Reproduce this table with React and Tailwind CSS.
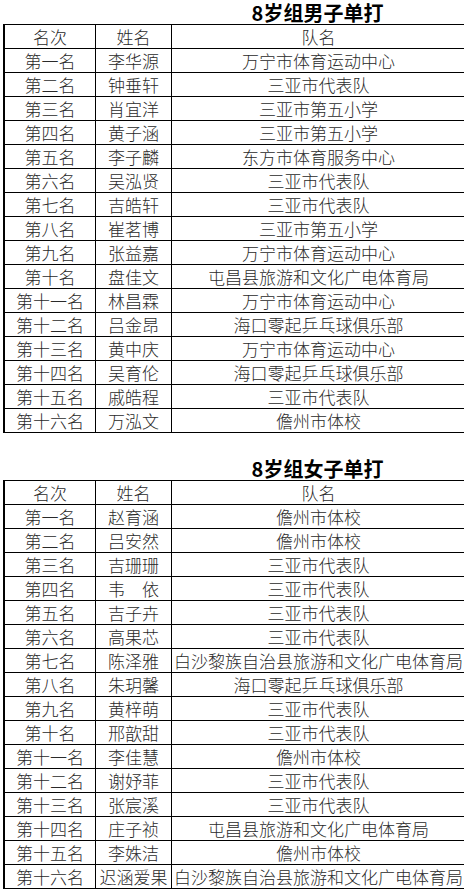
import React from "react";

const boys = [
  ["第一名", "李华源", "万宁市体育运动中心"],
  ["第二名", "钟垂轩", "三亚市代表队"],
  ["第三名", "肖宜洋", "三亚市第五小学"],
  ["第四名", "黄子涵", "三亚市第五小学"],
  ["第五名", "李子麟", "东方市体育服务中心"],
  ["第六名", "吴泓贤", "三亚市代表队"],
  ["第七名", "吉皓轩", "三亚市代表队"],
  ["第八名", "崔茗博", "三亚市第五小学"],
  ["第九名", "张益嘉", "万宁市体育运动中心"],
  ["第十名", "盘佳文", "屯昌县旅游和文化广电体育局"],
  ["第十一名", "林昌霖", "万宁市体育运动中心"],
  ["第十二名", "吕金昂", "海口零起乒乓球俱乐部"],
  ["第十三名", "黄中庆", "万宁市体育运动中心"],
  ["第十四名", "吴育伦", "海口零起乒乓球俱乐部"],
  ["第十五名", "戚皓程", "三亚市代表队"],
  ["第十六名", "万泓文", "儋州市体校"],
];

const girls = [
  ["第一名", "赵育涵", "儋州市体校"],
  ["第二名", "吕安然", "儋州市体校"],
  ["第三名", "吉珊珊", "三亚市代表队"],
  ["第四名", "韦　依", "三亚市代表队"],
  ["第五名", "吉子卉", "三亚市代表队"],
  ["第六名", "高果芯", "三亚市代表队"],
  ["第七名", "陈泽雅", "白沙黎族自治县旅游和文化广电体育局"],
  ["第八名", "朱玥馨", "海口零起乒乓球俱乐部"],
  ["第九名", "黄梓萌", "三亚市代表队"],
  ["第十名", "邢歆甜", "三亚市代表队"],
  ["第十一名", "李佳慧", "儋州市体校"],
  ["第十二名", "谢妤菲", "三亚市代表队"],
  ["第十三名", "张宸溪", "三亚市代表队"],
  ["第十四名", "庄子祯", "屯昌县旅游和文化广电体育局"],
  ["第十五名", "李姝洁", "儋州市体校"],
  ["第十六名", "迟涵爱果", "白沙黎族自治县旅游和文化广电体育局"],
];

function Row({ cells }) {
  return (
    <div className="grid grid-cols-[91px_76px_1fr] h-[24px] border-b border-black leading-[23px]">
      <div className="flex items-center justify-center whitespace-nowrap border-r border-black">{cells[0]}</div>
      <div className="flex items-center justify-center whitespace-nowrap border-r border-black">{cells[1]}</div>
      <div className="flex items-center justify-center whitespace-nowrap">{cells[2]}</div>
    </div>
  );
}

function Section({ title, rows }) {
  return (
    <div>
      <div className="grid grid-cols-[91px_76px_1fr] h-[24px]">
        <div />
        <div />
        <div className="flex items-center justify-center text-[20px] font-bold leading-[22px] pt-[2px] text-black">{title}</div>
      </div>
      <div className="border-t border-l-2 border-black">
        <Row cells={["名次", "姓名", "队名"]} />
        {rows.map((r, i) => (
          <Row key={i} cells={r} />
        ))}
      </div>
    </div>
  );
}

export default function App() {
  return (
    <div
      className="w-[464px] h-[892px] overflow-hidden bg-white text-[#2a2a2a] text-[17px] font-light"
      style={{ fontFamily: '"Noto Sans CJK SC", "Noto Sans", sans-serif' }}
    >
      <div className="w-[462px] ml-[3px]">
        <Section title="8岁组男子单打" rows={boys} />
        <div className="h-[23px]" />
        <Section title="8岁组女子单打" rows={girls} />
      </div>
    </div>
  );
}
